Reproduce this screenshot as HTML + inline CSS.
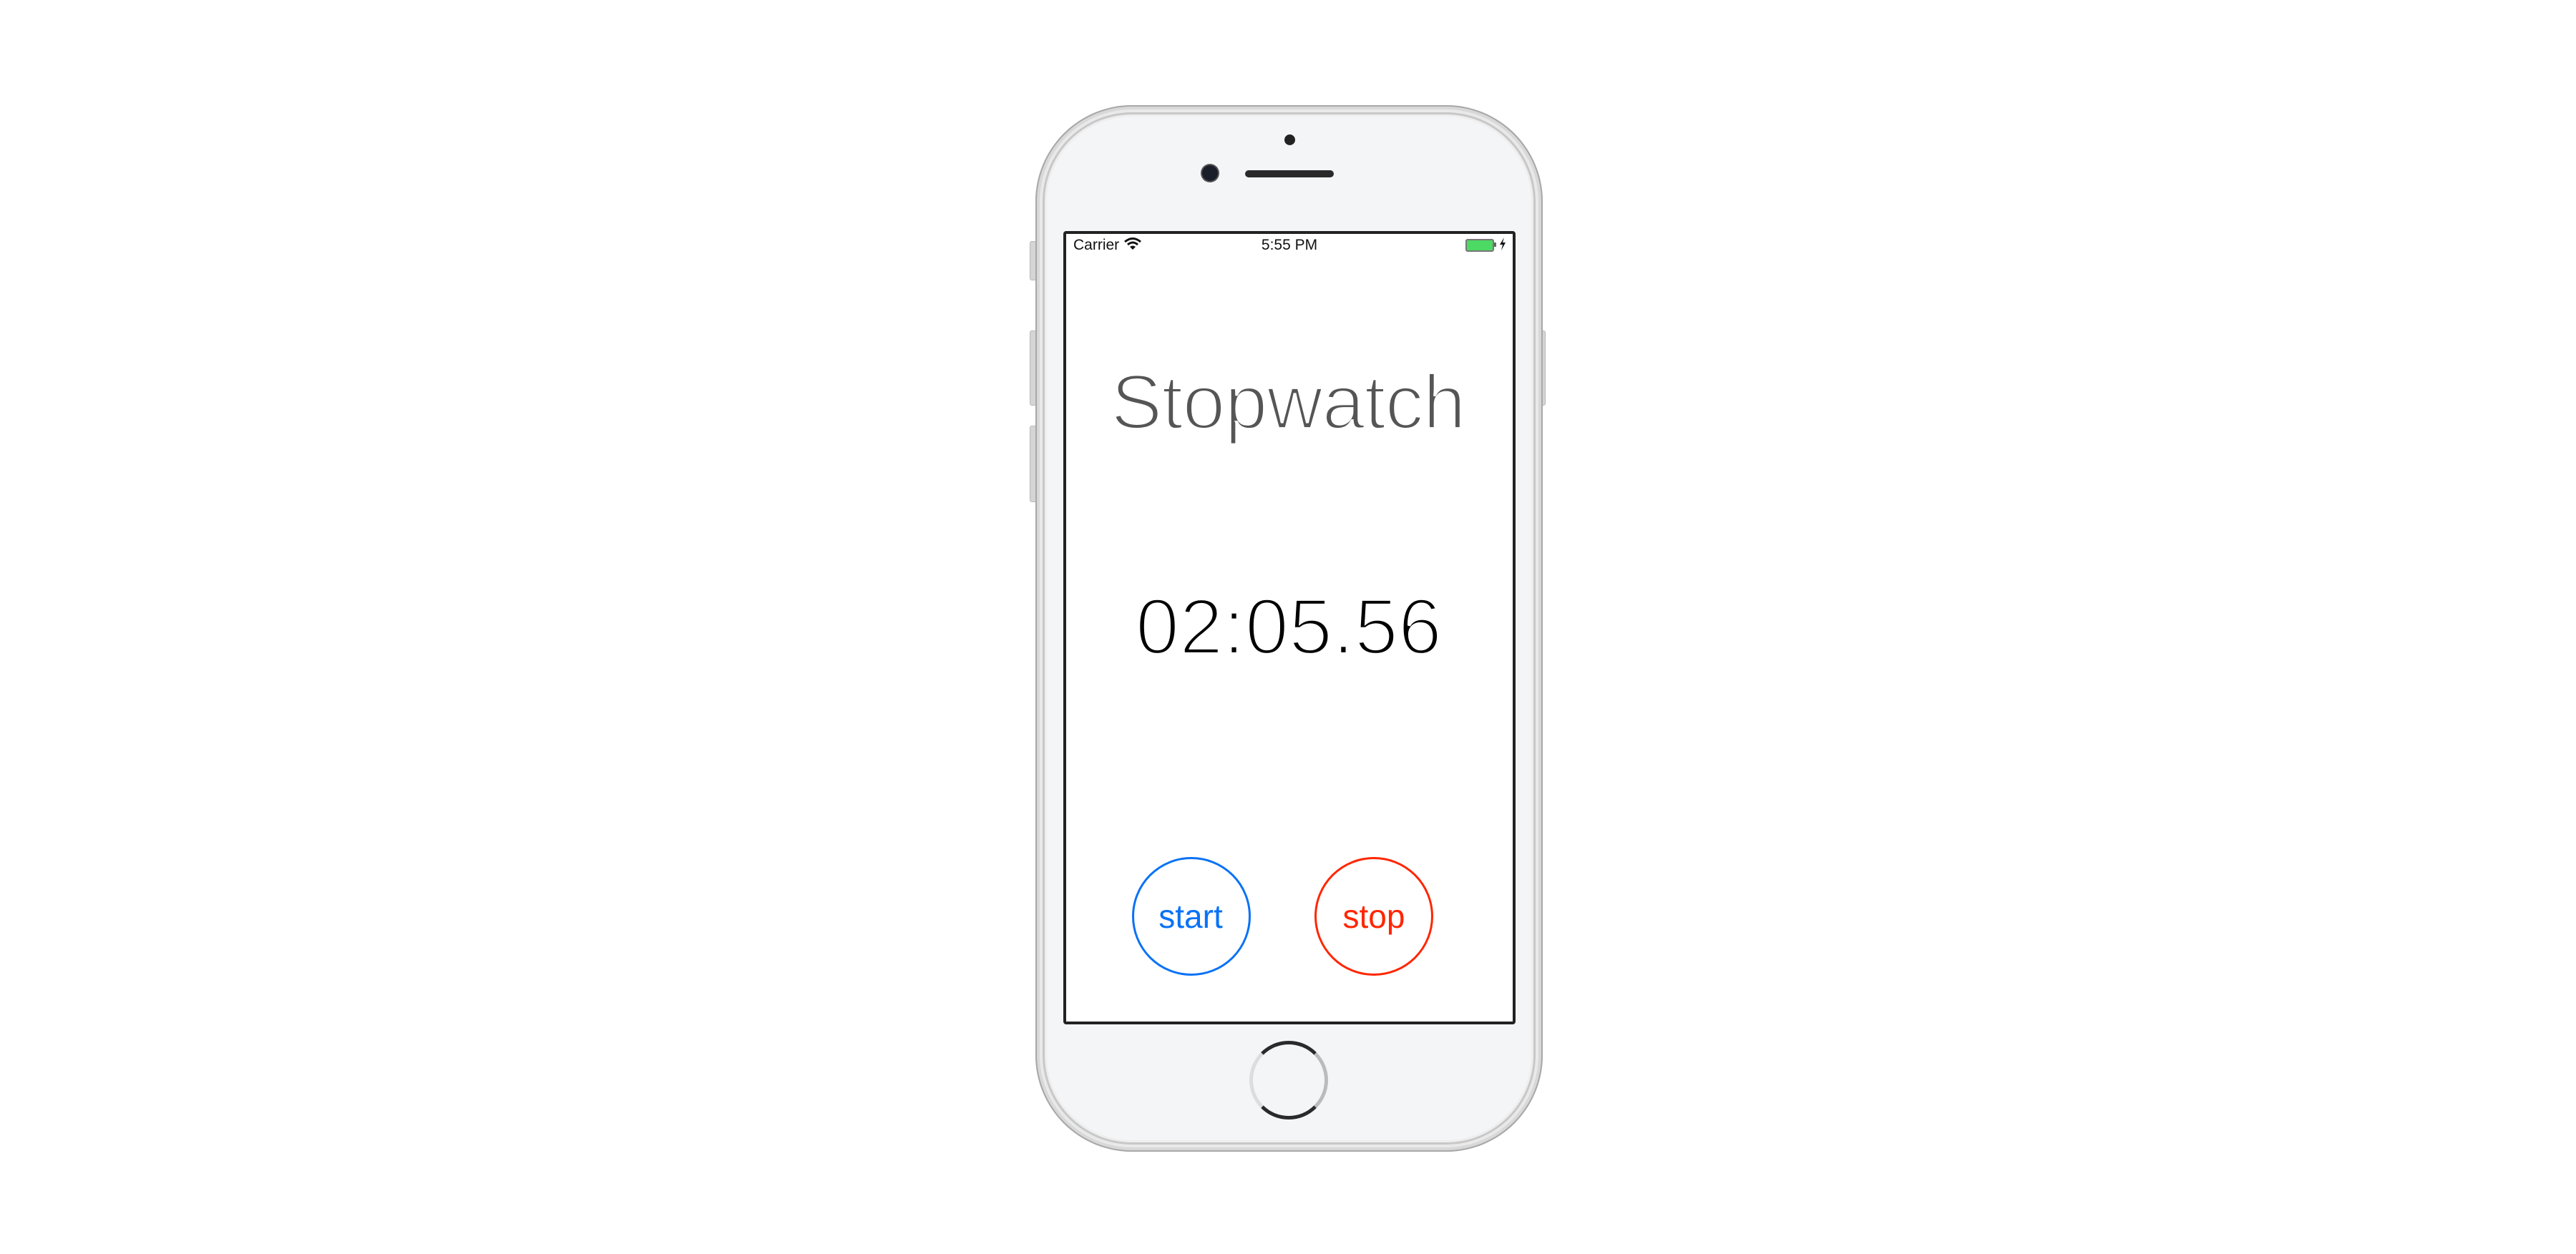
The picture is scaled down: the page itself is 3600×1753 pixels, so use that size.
<!DOCTYPE html>
<html><head><meta charset="utf-8"><style>
html,body{margin:0;padding:0;background:#fff;}
body{width:3600px;height:1753px;position:relative;overflow:hidden;font-family:"Liberation Sans",sans-serif;}
.abs{position:absolute;}
.phone{left:1447px;top:147px;width:709px;height:1463px;border-radius:135px;background:#f4f5f7;box-shadow:inset 0 0 0 2px #a8a8a8,inset 0 0 0 6px #d8d8d8,inset 0 0 0 10px #e9e9e9,inset 0 0 0 13px #c8c8c8,inset 0 0 0 16px #eeeeee;}
.screen{left:1486px;top:323px;width:624px;height:1101px;border:4px solid #222;border-radius:4px;background:#fff;}
.side{background:#d5d5d5;border:1px solid #b8b8b8;border-radius:3px;width:8px;}
.txt{white-space:nowrap;}
</style></head><body>
<div class="abs side" style="left:1439px;top:337px;height:53px"></div>
<div class="abs side" style="left:1439px;top:462px;height:103px"></div>
<div class="abs side" style="left:1439px;top:595px;height:105px"></div>
<div class="abs side" style="left:2150px;top:462px;height:103px"></div>
<div class="abs phone"></div>
<div class="abs" style="left:1795px;top:188px;width:15px;height:15px;border-radius:50%;background:#222"></div>
<div class="abs" style="left:1680px;top:231px;width:22px;height:22px;border-radius:50%;background:#1a1d2a;box-shadow:0 0 0 2px #555"></div>
<div class="abs" style="left:1740px;top:238px;width:124px;height:10px;border-radius:5px;background:#2a2a2a"></div>
<div class="abs screen"></div>
<div class="abs txt" style="left:1500px;top:331px;font-size:21px;color:#111">Carrier</div>
<svg class="abs" style="left:1570px;top:331px" width="26" height="20" viewBox="0 0 26 20"><path d="M2 7 Q13 -2 24 7" stroke="#111" stroke-width="3" fill="none"/><path d="M6 11 Q13 5 20 11" stroke="#111" stroke-width="3" fill="none"/><path d="M13 18 L9 14 Q13 11 17 14 Z" fill="#111"/></svg>
<div class="abs txt" style="left:1802px;top:331px;font-size:21px;color:#111;transform:translateX(-50%)">5:55 PM</div>
<div class="abs" style="left:2048px;top:334px;width:36px;height:14px;border:2px solid #777;border-radius:3px;background:#4cd964"></div>
<div class="abs" style="left:2088px;top:339px;width:3px;height:6px;background:#666"></div>
<svg class="abs" style="left:2094px;top:331px" width="12" height="20" viewBox="0 0 12 20"><path d="M8 1 L2 11 L6 11 L4 19 L10 8 L6 8 Z" fill="#111"/></svg>
<div class="abs txt" style="left:1800px;top:504px;transform:translateX(-50%);font-size:108px;line-height:116px;color:#555;-webkit-text-stroke:3.8px #fff;letter-spacing:-1px">Stopwatch</div>
<div class="abs txt" style="left:1801px;top:819px;transform:translateX(-50%);font-size:110px;line-height:116px;color:#000;-webkit-text-stroke:4.2px #fff">02:05.56</div>
<div class="abs" style="left:1582px;top:1198px;width:160px;height:160px;border:3px solid #0a72f5;border-radius:50%"></div>
<div class="abs txt" style="left:1664px;top:1256px;transform:translateX(-50%);font-size:46px;line-height:50px;color:#0a72f5">start</div>
<div class="abs" style="left:1837px;top:1198px;width:160px;height:160px;border:3px solid #ff2600;border-radius:50%"></div>
<div class="abs txt" style="left:1920px;top:1256px;transform:translateX(-50%);font-size:46px;line-height:50px;color:#ff2600">stop</div>
<div class="abs" style="left:1746px;top:1455px;width:100px;height:100px;border-radius:50%;border:5px solid #2a2a2a;border-right-color:#bbb;border-left-color:#ddd"></div>
</body></html>
